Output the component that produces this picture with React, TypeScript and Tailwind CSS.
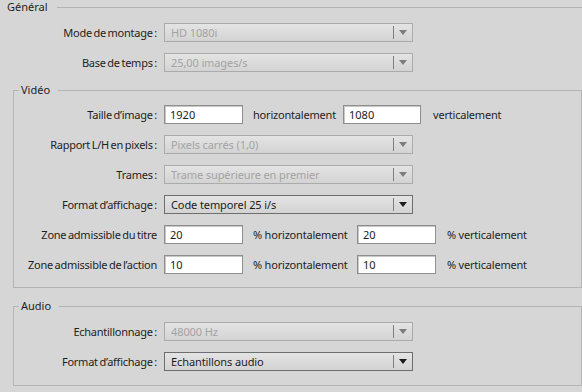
import React from "react";

function Arrow({ enabled }: { enabled: boolean }) {
  return (
    <svg width="8" height="5" viewBox="0 0 8 5">
      <path d="M0 0 L8 0 L4 5 Z" fill={enabled ? "#1c1c1c" : "#7c7c7c"} />
    </svg>
  );
}

function Select({ value, enabled = false }: { value: string; enabled?: boolean }) {
  return (
    <div
      className={
        "flex h-[19px] w-[249px] items-stretch border bg-gradient-to-b from-[#e4e4e4] to-[#d3d3d3] " +
        (enabled ? "border-[#6e6e6e]" : "border-[#ababab]")
      }
    >
      <div
        className={
          "flex flex-1 items-center whitespace-nowrap pl-[6px] text-[11px] leading-none tracking-[-0.1px] " +
          (enabled ? "text-[#1c1c1c]" : "text-[#a3a3a3]")
        }
      >
        {value}
      </div>
      <div className="my-[2px] w-px bg-[#7d7d7d]" />
      <div className="flex w-[18px] items-center justify-center">
        <Arrow enabled={enabled} />
      </div>
    </div>
  );
}

function Input({ value, w }: { value: string; w: string }) {
  return (
    <div
      className={
        "flex h-[19px] shrink-0 items-center border border-[#8e8e8e] bg-white pl-[5px] text-[11px] leading-none text-[#1c1c1c] shadow-[inset_1px_1px_0_#c8c8c8] " +
        w
      }
    >
      {value}
    </div>
  );
}

function Row({
  label,
  lw,
  children,
}: {
  label: string;
  lw: string;
  children: React.ReactNode;
}) {
  return (
    <div className="flex h-[19px] items-center">
      <div
        className={
          "shrink-0 whitespace-nowrap pr-[7px] text-right text-[11px] leading-none tracking-[-0.25px] text-[#1e1e1e] [word-spacing:-1px] " +
          lw
        }
      >
        {label}
      </div>
      {children}
    </div>
  );
}

function Text({ children, w }: { children: React.ReactNode; w?: string }) {
  return (
    <span
      className={
        "shrink-0 whitespace-nowrap text-[11px] leading-none tracking-[-0.2px] text-[#1e1e1e] " + (w ?? "")
      }
    >
      {children}
    </span>
  );
}

function Group({
  title,
  className,
  children,
}: {
  title: string;
  className: string;
  children: React.ReactNode;
}) {
  return (
    <fieldset className={"ml-[13px] w-[569px] border border-[#b4b4b4] " + className}>
      <legend className="ml-[5px] pl-[2px] pr-[8px] text-[11px] leading-[14px] text-[#1e1e1e]">{title}</legend>
      {children}
    </fieldset>
  );
}

export default function App() {
  const lw0 = "w-[164px]";
  const lw1 = "w-[150px]";
  return (
    <div
      className="h-[392px] w-[582px] overflow-hidden bg-[#d6d6d6] text-[#1e1e1e]"
      style={{ fontFamily: '"Noto Sans", "DejaVu Sans", sans-serif' }}
    >
      <div className="flex h-[14px] items-center">
        <span className="pl-[7px] pr-[9px] text-[11px] leading-[14px]">Général</span>
        <div className="h-px flex-1 bg-[#b4b4b4]" />
      </div>
      <div className="mt-[9px] flex flex-col gap-[11px]">
        <Row label="Mode de montage :" lw={lw0}>
          <Select value="HD 1080i" />
        </Row>
        <Row label="Base de temps :" lw={lw0}>
          <Select value="25,00 images/s" />
        </Row>
      </div>

      <Group title="Vidéo" className="mt-[11px] pb-[13px]">
        <div className="mt-[8px] flex flex-col gap-[11px]">
          <Row label="Taille d’image :" lw={lw1}>
            <Input value="1920" w="w-[79px]" />
            <Text w="ml-[10px] w-[90px]">horizontalement</Text>
            <Input value="1080" w="w-[78px]" />
            <Text w="ml-[12px]">verticalement</Text>
          </Row>
          <Row label="Rapport L/H en pixels :" lw={lw1}>
            <Select value="Pixels carrés (1,0)" />
          </Row>
          <Row label="Trames :" lw={lw1}>
            <Select value="Trame supérieure en premier" />
          </Row>
          <Row label="Format d’affichage :" lw={lw1}>
            <Select value="Code temporel 25 i/s" enabled />
          </Row>
          <Row label="Zone admissible du titre" lw={lw1}>
            <Input value="20" w="w-[79px]" />
            <Text w="ml-[10px] w-[104px]">% horizontalement</Text>
            <Input value="20" w="w-[79px]" />
            <Text w="ml-[11px]">% verticalement</Text>
          </Row>
          <Row label="Zone admissible de l’action" lw={lw1}>
            <Input value="10" w="w-[79px]" />
            <Text w="ml-[10px] w-[104px]">% horizontalement</Text>
            <Input value="10" w="w-[79px]" />
            <Text w="ml-[11px]">% verticalement</Text>
          </Row>
        </div>
      </Group>

      <Group title="Audio" className="mt-[11px] pb-[14px]">
        <div className="mt-[9px] flex flex-col gap-[11px]">
          <Row label="Echantillonnage :" lw={lw1}>
            <Select value="48000 Hz" />
          </Row>
          <Row label="Format d’affichage :" lw={lw1}>
            <Select value="Echantillons audio" enabled />
          </Row>
        </div>
      </Group>
    </div>
  );
}
